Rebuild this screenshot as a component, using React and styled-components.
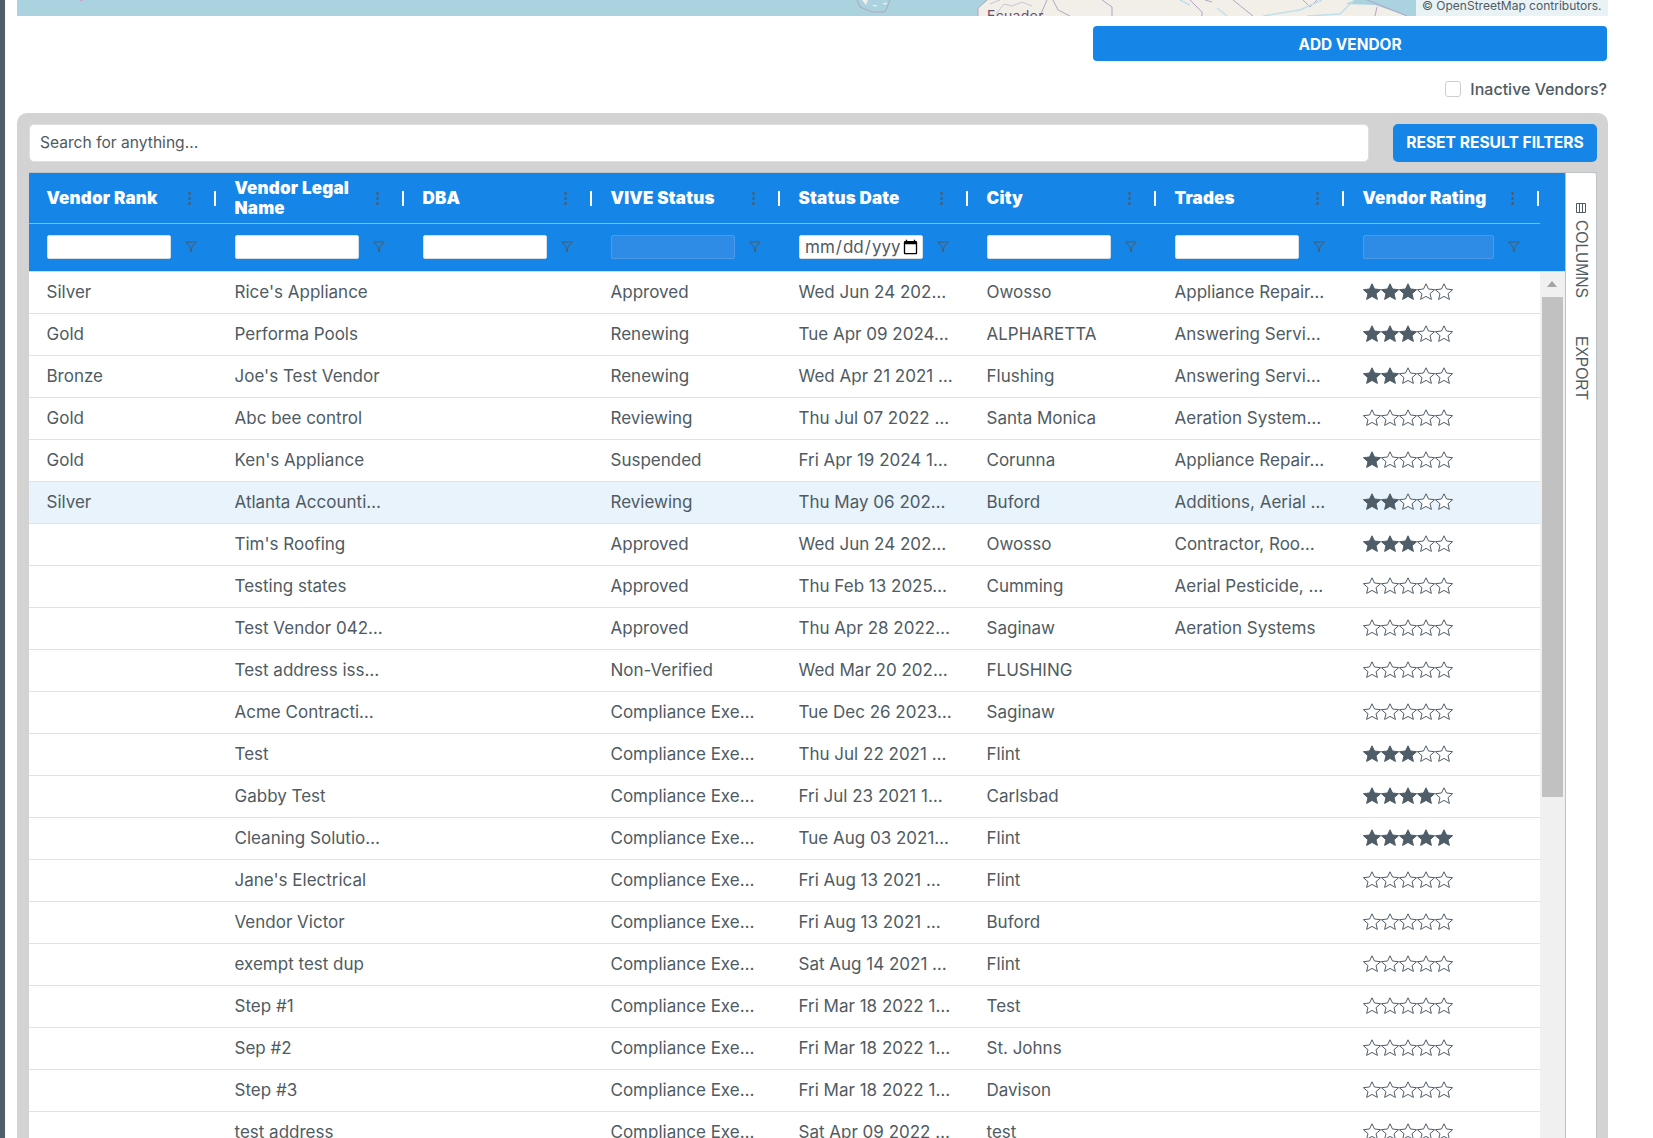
import React from 'react';
import styled, { createGlobalStyle } from 'styled-components';

const GlobalStyle = createGlobalStyle`
    html, body {
        margin: 0;
        height: 100%;
        overflow: hidden;
        background: #fff;
    }
    body {
        font-family: Inter, Roboto, "Liberation Sans", sans-serif;
        color: #4f5b62;
    }
    * {
        box-sizing: border-box;
    }
`;

const Page = styled.div`
    display: flex;
    height: 100vh;
    overflow: hidden;
`;

const Rail = styled.div`
    flex: 0 0 5px;
    background: #4f5f69;
`;

const Main = styled.main`
    flex: 1;
    min-width: 0;
    padding: 0 45px 0 12px;
`;

const MapStrip = styled.div`
    position: relative;
    height: 16px;
    overflow: hidden;
    background: #aad3df;

    svg {
        display: block;
    }
`;

const Attribution = styled.div`
    position: absolute;
    top: 0;
    right: 0;
    width: 192px;
    height: 16px;
    padding-left: 6px;
    background: #e9f3f6;
    font-size: 12px;
    line-height: 12px;
    white-space: nowrap;
`;

const ActionRow = styled.div`
    display: flex;
    justify-content: flex-end;
    margin-top: 10px;
    padding-right: 1px;
`;

const AddButton = styled.button`
    width: 514px;
    height: 35px;
    padding: 1px 0 0;
    border: none;
    border-radius: 4px;
    background: #1685e8;
    color: #fff;
    font: 700 15.4px Inter, sans-serif;
`;

const InactiveRow = styled.label`
    display: flex;
    align-items: center;
    justify-content: flex-end;
    gap: 9px;
    height: 16px;
    margin-top: 20px;
    padding: 0 1px 1px 0;
    font-size: 16px;
    font-weight: 500;
`;

const Checkbox = styled.span`
    width: 16px;
    height: 16px;
    border: 1px solid #c9cfd3;
    border-radius: 3px;
    background: #fff;
`;

const Panel = styled.section`
    height: 1100px;
    margin-top: 16px;
    padding: 11px 11px 0 12px;
    border-radius: 10px 10px 0 0;
    background: #d3d3d3;
`;

const Toolbar = styled.div`
    display: flex;
    gap: 24px;
    height: 38px;
`;

const SearchBox = styled.input`
    flex: 1;
    min-width: 0;
    padding: 0 10px 2px;
    border: 1px solid #dfdfdf;
    border-radius: 5px;
    background: #fff;
    font: 400 15.6px Inter, sans-serif;
    color: #4f5b62;

    &::placeholder {
        color: #4f5b62;
        opacity: 1;
    }
`;

const ResetButton = styled.button`
    flex: 0 0 204px;
    padding: 0 0 2px;
    border: none;
    border-radius: 5px;
    background: #1685e8;
    color: #fff;
    font: 700 15.6px Inter, sans-serif;
`;

const GridFrame = styled.div`
    display: flex;
    margin-top: 10px;
    height: 1000px;
    border-top: 1px solid #bdc3c7;
`;

const GridMain = styled.div`
    flex: 1;
    min-width: 0;
`;

const GridHead = styled.div`
    background: #1685e8;
`;

const columnTemplate = `repeat(7, 188px) 195px`;

const HeaderRow = styled.div`
    display: grid;
    grid-template-columns: ${columnTemplate};
    width: 1511px;
    height: 51px;
    border-bottom: 1px solid #7dbcf2;
`;

const HeaderCell = styled.div`
    display: flex;
    align-items: center;
    padding-left: 17.5px;
    padding-right: 1px;
`;

const HeaderLabel = styled.div`
    flex: 1;
    min-width: 0;
    color: #fff;
    font-size: 17px;
    font-weight: 900;
    letter-spacing: 0.2px;
    line-height: 20px;
`;

const Dots = styled.svg`
    flex: 0 0 3px;
    width: 3px;
    height: 13px;
    margin-right: 23px;
`;

const Separator = styled.span`
    flex: 0 0 2px;
    height: 15px;
    background: #fff;
`;

const FilterRow = styled.div`
    display: grid;
    grid-template-columns: ${columnTemplate};
    width: 1511px;
    height: 47px;
    padding-bottom: 1px;
`;

const FilterCell = styled.div`
    display: flex;
    align-items: center;
    padding: 0 17px 0 18px;
`;

const FilterInput = styled.input`
    flex: 1;
    min-width: 0;
    width: 0;
    height: 24px;
    margin-right: 14px;
    padding: 0 1px 0 4px;
    border: 1px solid ${props => (props.disabled ? '#4b9bea' : '#d6dde3')};
    border-radius: 2px;
    background: ${props => (props.disabled ? '#2f8ce6' : '#fff')};
    color: #4f5b62;
    font: 400 17px Inter, sans-serif;
`;

const Funnel = styled.svg`
    flex: 0 0 12px;
    width: 12px;
    height: 12px;
    margin-right: 3px;
`;

const GridBody = styled.div`
    display: flex;
    border-top: 1px solid #d3dbe2;
`;

const Rows = styled.div`
    flex: 0 0 1511px;
`;

const Row = styled.div`
    display: grid;
    grid-template-columns: ${columnTemplate};
    height: 42px;
    border-bottom: 1px solid #dde2eb;
    background: ${props => (props.selected ? '#e8f3fc' : '#fff')};
`;

const Cell = styled.div`
    padding: 0 8px 0 17.5px;
    overflow: hidden;
    white-space: nowrap;
    font-size: 17px;
    line-height: 41px;
    color: #4f5b62;
`;

const StarCell = styled.div`
    display: flex;
    align-items: center;
    padding: 0 0 2px 17.5px;
`;

const Star = styled.svg`
    flex: 0 0 18px;
    width: 18px;
    height: 17px;
`;

const Scrollbar = styled.div`
    position: relative;
    flex: 1;
    background: #f0f0f0;
`;

const ScrollArrow = styled.span`
    position: absolute;
    top: 9px;
    left: 7px;
    border-left: 5.5px solid transparent;
    border-right: 5.5px solid transparent;
    border-bottom: 6px solid #a3a3a3;
`;

const ScrollThumb = styled.div`
    position: absolute;
    top: 25px;
    left: 2px;
    width: 21px;
    height: 500px;
    background: #c1c1c1;
`;

const SideBar = styled.aside`
    flex: 0 0 32px;
    display: flex;
    flex-direction: column;
    align-items: center;
    padding-top: 30px;
    border-left: 1px solid #bdc3c7;
    border-right: 1px solid #bdc3c7;
    border-radius: 0 3px 0 0;
    background: #fff;
`;

const SideTab = styled.div`
    display: flex;
    align-items: center;
    gap: 7px;
    writing-mode: vertical-rl;
    font: 400 15.6px "Liberation Sans", sans-serif;
    color: #4f5b62;
    margin-bottom: ${props => props.gap || 0}px;
`;

const columns = [
    { label: 'Vendor Rank' },
    { label: 'Vendor Legal Name' },
    { label: 'DBA' },
    { label: 'VIVE Status', disabled: true },
    { label: 'Status Date', type: 'date' },
    { label: 'City' },
    { label: 'Trades' },
    { label: 'Vendor Rating', disabled: true },
];

const vendors = [
    ['Silver', "Rice's Appliance", 'Approved', 'Wed Jun 24 202…', 'Owosso', 'Appliance Repair…', 3],
    ['Gold', 'Performa Pools', 'Renewing', 'Tue Apr 09 2024…', 'ALPHARETTA', 'Answering Servi…', 3],
    ['Bronze', "Joe's Test Vendor", 'Renewing', 'Wed Apr 21 2021 …', 'Flushing', 'Answering Servi…', 2],
    ['Gold', 'Abc bee control', 'Reviewing', 'Thu Jul 07 2022 …', 'Santa Monica', 'Aeration System…', 0],
    ['Gold', "Ken's Appliance", 'Suspended', 'Fri Apr 19 2024 1…', 'Corunna', 'Appliance Repair…', 1],
    ['Silver', 'Atlanta Accounti…', 'Reviewing', 'Thu May 06 202…', 'Buford', 'Additions, Aerial …', 2],
    ['', "Tim's Roofing", 'Approved', 'Wed Jun 24 202…', 'Owosso', 'Contractor, Roo…', 3],
    ['', 'Testing states', 'Approved', 'Thu Feb 13 2025…', 'Cumming', 'Aerial Pesticide, …', 0],
    ['', 'Test Vendor 042…', 'Approved', 'Thu Apr 28 2022…', 'Saginaw', 'Aeration Systems', 0],
    ['', 'Test address iss…', 'Non-Verified', 'Wed Mar 20 202…', 'FLUSHING', '', 0],
    ['', 'Acme Contracti…', 'Compliance Exe…', 'Tue Dec 26 2023…', 'Saginaw', '', 0],
    ['', 'Test', 'Compliance Exe…', 'Thu Jul 22 2021 …', 'Flint', '', 3],
    ['', 'Gabby Test', 'Compliance Exe…', 'Fri Jul 23 2021 1…', 'Carlsbad', '', 4],
    ['', 'Cleaning Solutio…', 'Compliance Exe…', 'Tue Aug 03 2021…', 'Flint', '', 5],
    ['', "Jane's Electrical", 'Compliance Exe…', 'Fri Aug 13 2021 …', 'Flint', '', 0],
    ['', 'Vendor Victor', 'Compliance Exe…', 'Fri Aug 13 2021 …', 'Buford', '', 0],
    ['', 'exempt test dup', 'Compliance Exe…', 'Sat Aug 14 2021 …', 'Flint', '', 0],
    ['', 'Step #1', 'Compliance Exe…', 'Fri Mar 18 2022 1…', 'Test', '', 0],
    ['', 'Sep #2', 'Compliance Exe…', 'Fri Mar 18 2022 1…', 'St. Johns', '', 0],
    ['', 'Step #3', 'Compliance Exe…', 'Fri Mar 18 2022 1…', 'Davison', '', 0],
    ['', 'test address', 'Compliance Exe…', 'Sat Apr 09 2022 …', 'test', '', 0],
];

function MapPicture() {
    return (
        <svg width="1591" height="16" viewBox="17 0 1591 16">
            <rect x="17" y="0" width="1591" height="16" fill="#aad3df" />
            <polygon points="988,0 1354,0 1346,4 1375,5 1407,16 978,16 978,8" fill="#f2efe9" />
            <g fill="none" stroke="#b3a4c4" strokeWidth="1">
                <path d="M857 0 L860 7 L872 12 L885 12 L890 0" />
                <path d="M987 0 L978 8 L978 16" />
                <path d="M990 4 L1000 0 M996 14 L1004 4 L1012 6 L1022 2 L1032 6" strokeWidth="0.6" />
                <path d="M1047 0 L1040 16 M1053 0 L1058 10 L1070 16 M1102 0 L1112 7 L1112 16" />
                <path d="M1190 0 L1202 12 L1202 16 M1205 0 L1212 2 M1233 0 L1253 16 M1303 0 L1310 7 L1317 0" />
                <path d="M1367 0 L1407 16 M1377 7 L1375 16" />
            </g>
            <g fill="none" stroke="#bfe0ea" strokeWidth="1.5">
                <path d="M1180 0 L1190 5 M1217 8 L1227 16 M1263 16 L1300 10 L1322 0 M1307 16 L1340 14 L1354 0" />
            </g>
            <path d="M862 0 L866 5 L868 0 Z M872 5 L876 7 L877 5 Z M882 3 L886 5 L887 3 Z" fill="#f2efe9" />
            <rect x="80" y="0" width="3" height="1" fill="#c9a9c6" />
            <text x="987" y="21" fill="#6b4c6e" fontFamily="Inter, sans-serif" fontSize="14" letterSpacing="0.3">Ecuador</text>
        </svg>
    );
}

function DotsIcon() {
    return (
        <Dots viewBox="0 0 3 13">
            <rect x="0.5" y="0" width="2" height="3" fill="#4f5b62" />
            <rect x="0.5" y="5" width="2" height="3" fill="#4f5b62" />
            <rect x="0.5" y="10" width="2" height="3" fill="#4f5b62" />
        </Dots>
    );
}

function FunnelIcon() {
    return (
        <Funnel viewBox="0 0 12 12">
            <path d="M0.7 1 H11.3 L7.3 5.5 L6 11 L4.7 5.5 Z" fill="none" stroke="#4f5b62" strokeWidth="1" />
        </Funnel>
    );
}

const starPoints = '9,0.8 11.5,6 17.6,6.7 13,10.7 14.4,16.4 9,13.4 3.6,16.4 5,10.7 0.4,6.7 6.5,6';

function Stars({ value }) {
    return (
        <StarCell>
            {[1, 2, 3, 4, 5].map(n => (
                <Star key={n} viewBox="0 0 18 17">
                    <polygon
                        points={starPoints}
                        fill={n <= value ? '#4f5d68' : '#fff'}
                        stroke="#4f5d68"
                        strokeWidth="1"
                    />
                </Star>
            ))}
        </StarCell>
    );
}

export default function App() {
    return (
        <Page>
            <GlobalStyle />
            <Rail />
            <Main>
                <MapStrip>
                    <MapPicture />
                    <Attribution>© OpenStreetMap contributors.</Attribution>
                </MapStrip>
                <ActionRow>
                    <AddButton>ADD VENDOR</AddButton>
                </ActionRow>
                <InactiveRow>
                    <Checkbox />
                    Inactive Vendors?
                </InactiveRow>
                <Panel>
                    <Toolbar>
                        <SearchBox placeholder="Search for anything..." />
                        <ResetButton>RESET RESULT FILTERS</ResetButton>
                    </Toolbar>
                    <GridFrame>
                        <GridMain>
                            <GridHead>
                                <HeaderRow>
                                    {columns.map(col => (
                                        <HeaderCell key={col.label}>
                                            <HeaderLabel>{col.label}</HeaderLabel>
                                            <DotsIcon />
                                            <Separator />
                                        </HeaderCell>
                                    ))}
                                </HeaderRow>
                                <FilterRow>
                                    {columns.map(col => (
                                        <FilterCell key={col.label}>
                                            <FilterInput type={col.type || 'text'} disabled={col.disabled} />
                                            <FunnelIcon />
                                        </FilterCell>
                                    ))}
                                </FilterRow>
                            </GridHead>
                            <GridBody>
                                <Rows>
                                    {vendors.map((v, index) => (
                                        <Row key={index} selected={index === 5}>
                                            <Cell>{v[0]}</Cell>
                                            <Cell>{v[1]}</Cell>
                                            <Cell />
                                            <Cell>{v[2]}</Cell>
                                            <Cell>{v[3]}</Cell>
                                            <Cell>{v[4]}</Cell>
                                            <Cell>{v[5]}</Cell>
                                            <Stars value={v[6]} />
                                        </Row>
                                    ))}
                                </Rows>
                                <Scrollbar>
                                    <ScrollArrow />
                                    <ScrollThumb />
                                </Scrollbar>
                            </GridBody>
                        </GridMain>
                        <SideBar>
                            <SideTab gap={38}>
                                <svg width="10" height="10" viewBox="0 0 10 10">
                                    <path d="M0.5 0.5 H9.5 V9.5 H0.5 Z M3.5 0.5 V9.5 M6.5 0.5 V9.5" fill="none" stroke="#4f5b62" strokeWidth="1" />
                                </svg>
                                COLUMNS
                            </SideTab>
                            <SideTab>EXPORT</SideTab>
                        </SideBar>
                    </GridFrame>
                </Panel>
            </Main>
        </Page>
    );
}
